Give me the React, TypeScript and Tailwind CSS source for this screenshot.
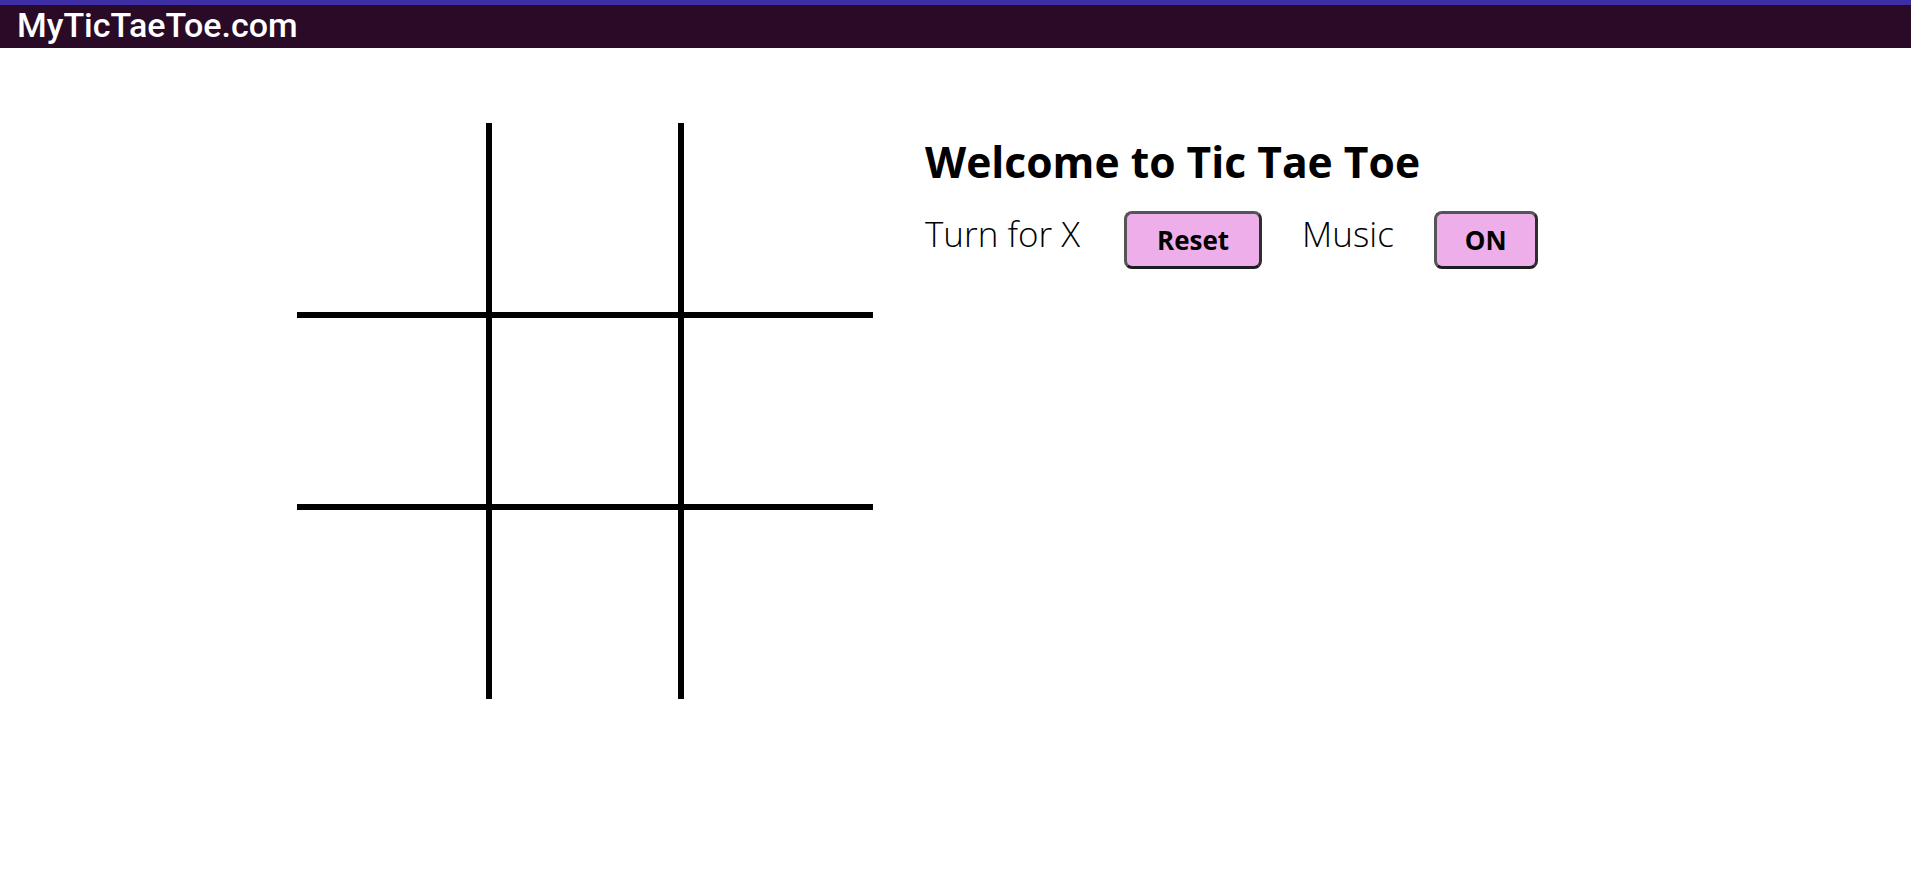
import { useState } from "react";

type Mark = "X" | "O" | null;

const cellBorders = [
  "",
  "border-x-[6px]",
  "",
  "border-y-[6px]",
  "border-[6px]",
  "border-y-[6px]",
  "",
  "border-x-[6px]",
  "",
];

export default function App() {
  const [cells, setCells] = useState<Mark[]>(Array(9).fill(null));
  const [turn, setTurn] = useState<"X" | "O">("X");
  const [music, setMusic] = useState(true);

  const play = (i: number) => {
    if (cells[i]) return;
    const next = [...cells];
    next[i] = turn;
    setCells(next);
    setTurn(turn === "X" ? "O" : "X");
  };

  const reset = () => {
    setCells(Array(9).fill(null));
    setTurn("X");
  };

  return (
    <div className="min-h-screen bg-white">
      <nav className="h-[48px] border-t-[5px] border-[#3d2ea6] bg-[#290a27] pl-[17px]">
        <span className="font-['Roboto',sans-serif] text-[34px] font-medium leading-[40px] text-white">
          MyTicTaeToe.com
        </span>
      </nav>

      <div className="flex pl-[297px] pt-[75px]">
        <div className="grid grid-cols-[189px_198px_189px] grid-rows-[189px_198px_189px]">
          {cells.map((c, i) => (
            <button
              key={i}
              type="button"
              onClick={() => play(i)}
              className={`flex items-center justify-center border-black font-['Open_Sans',sans-serif] text-[96px] ${cellBorders[i]}`}
            >
              {c}
            </button>
          ))}
        </div>

        <div className="ml-[52px] pt-[10px] font-['Open_Sans',sans-serif] text-black">
          <h1 className="text-[42.6px] font-bold leading-[56px]">Welcome to Tic Tae Toe</h1>
          <div className="mt-[22px] flex items-center gap-[40px]">
            <span className="mb-[12px] text-[35px] font-light leading-[46px]">Turn for {turn}</span>
            <button
              type="button"
              onClick={reset}
              className="ml-[4px] rounded-[8px] border-[3px] border-[#555] border-b-[#1e1e1e] border-r-[#2e2e2e] bg-[#edaee9] px-[30px] py-[10px] text-[26px] font-bold leading-[32px]"
            >
              Reset
            </button>
            <span className="mb-[12px] text-[35px] font-light leading-[46px]">Music</span>
            <button
              type="button"
              onClick={() => setMusic(!music)}
              className="rounded-[8px] border-[3px] border-[#555] border-b-[#1e1e1e] border-r-[#2e2e2e] bg-[#edaee9] px-[28px] py-[10px] text-[26px] font-bold leading-[32px]"
            >
              {music ? "ON" : "OFF"}
            </button>
          </div>
        </div>
      </div>
    </div>
  );
}
